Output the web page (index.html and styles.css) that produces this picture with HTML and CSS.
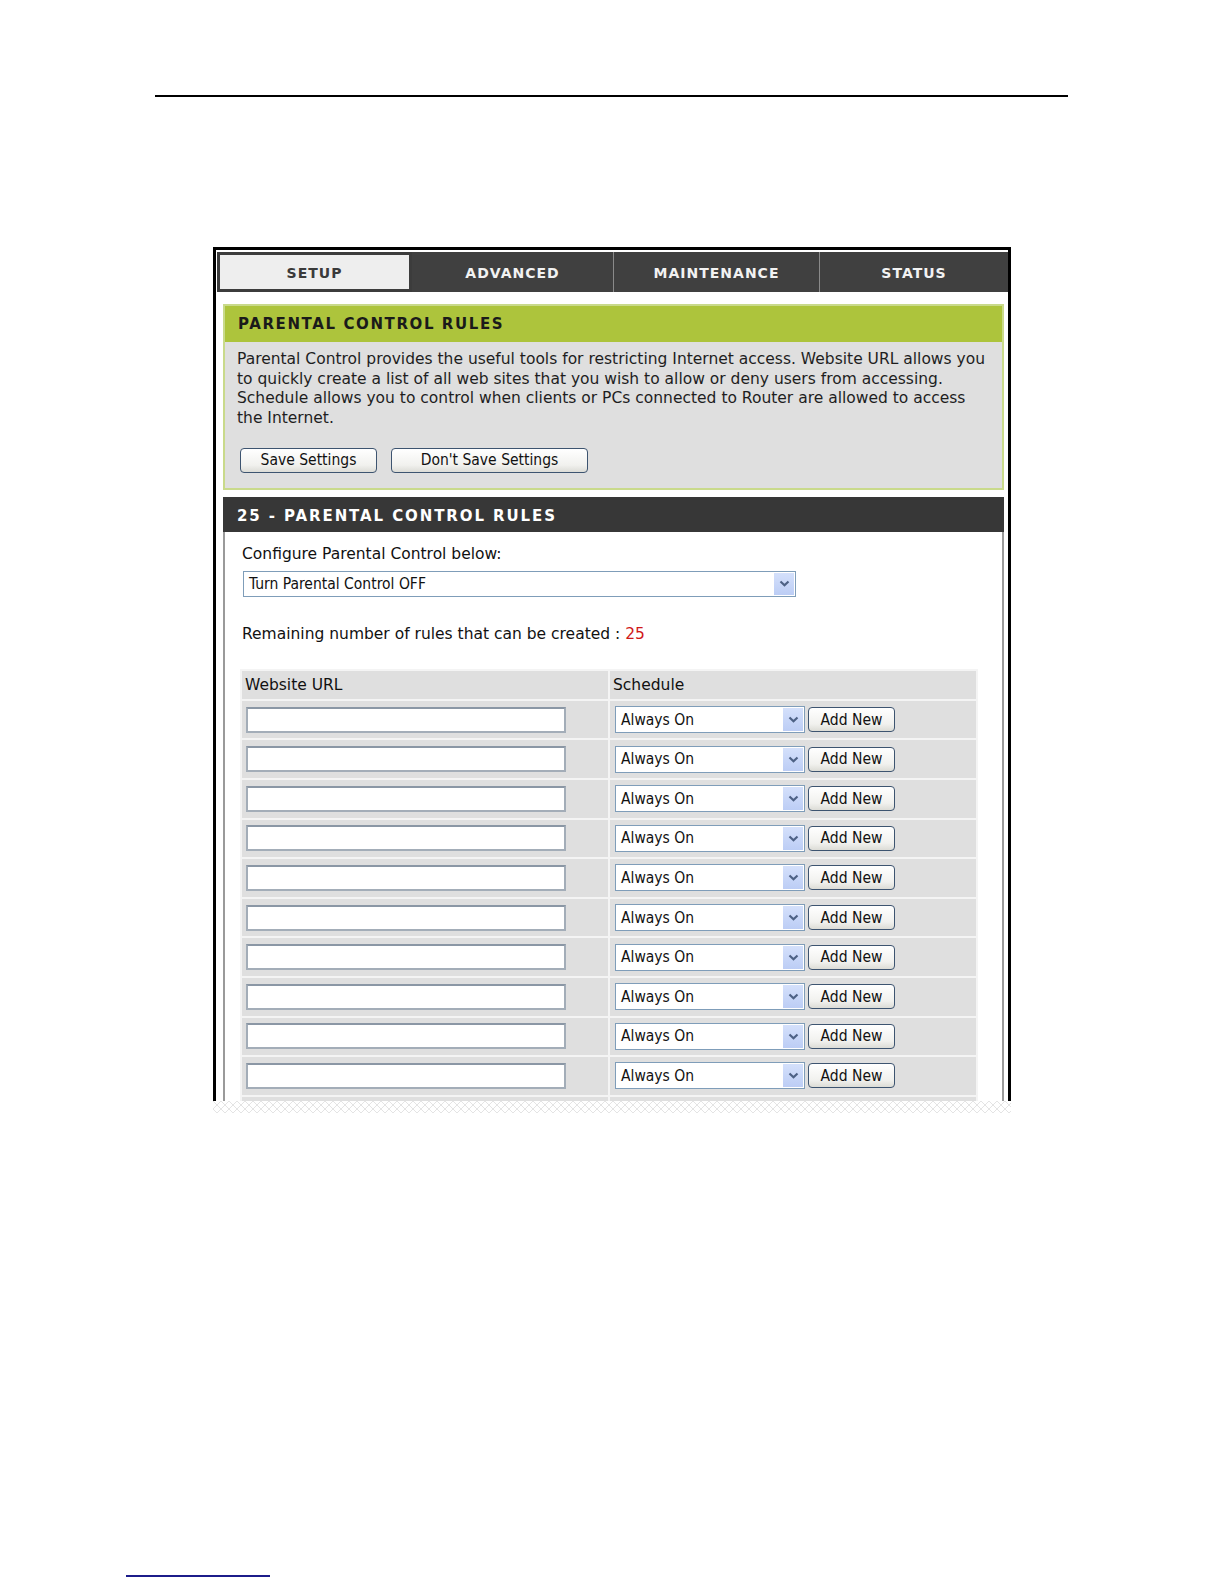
FILE: index.html
```html
<!DOCTYPE html>
<html lang="en">
<head>
    <meta charset="UTF-8">
    <title>Parental Control Rules</title>
    <link rel="stylesheet" href="styles.css">
</head>
<body>

    <hr class="page-rule">

    <!-- Router screenshot -->
    <div class="shot">
        <div class="tabs">
            <div class="tab tab-active">SETUP</div>
            <div class="tab tab-advanced">ADVANCED</div>
            <div class="tab tab-maint">MAINTENANCE</div>
            <div class="tab tab-status">STATUS</div>
        </div>

        <div class="content">
            <!-- Intro box -->
            <div class="intro-box">
                <div class="intro-title">PARENTAL CONTROL RULES</div>
                <div class="intro-body">
                    <p class="intro-text">Parental Control provides the useful tools for restricting Internet access. Website URL allows you<br>to quickly create a list of all web sites that you wish to allow or deny users from accessing.<br>Schedule allows you to control when clients or PCs connected to Router are allowed to access<br>the Internet.</p>
                    <div class="intro-buttons">
                        <button class="btn btn-save">Save Settings</button>
                        <button class="btn btn-nosave">Don't Save Settings</button>
                    </div>
                </div>
            </div>

            <!-- Rules box -->
            <div class="rules-box">
                <div class="rules-title">25 - PARENTAL CONTROL RULES</div>
                <div class="rules-body">
                    <div class="label">Configure Parental Control below:</div>
                    <div class="combo combo-wide">
                        <span class="combo-text">Turn Parental Control OFF</span>
                        <span class="combo-drop"><svg width="11" height="7" viewBox="0 0 11 7"><path d="M1.5 1.5 L5.5 5.2 L9.5 1.5" fill="none" stroke="#4d6185" stroke-width="2.2"/></svg></span>
                    </div>

                    <div class="remaining">Remaining number of rules that can be created : <span class="count">25</span></div>

                    <table class="rules-table" id="rules">
                        <tr class="head">
                            <th class="col-url">Website URL</th>
                            <th class="col-sched">Schedule</th>
                        </tr>
                    </table>
                </div>
            </div>
        </div>
    </div>
    <div class="tear"></div>

    <div class="footnote-rule"></div>

    <script>
        // build the rule rows; one more empty row peeks out under the cut edge
        const table = document.getElementById('rules');
        for (let i = 0; i < 10; i++) {
            const row = document.createElement('tr');
            row.innerHTML =
                '<td><input type="text" class="url-input"></td>' +
                '<td><div class="sched">' +
                    '<div class="combo combo-small"><span class="combo-text">Always On</span>' +
                    '<span class="combo-drop"><svg width="11" height="7" viewBox="0 0 11 7"><path d="M1.5 1.5 L5.5 5.2 L9.5 1.5" fill="none" stroke="#4d6185" stroke-width="2.2"/></svg></span></div>' +
                    '<button class="btn btn-add">Add New</button>' +
                '</div></td>';
            table.appendChild(row);
        }
        const tail = document.createElement('tr');
        tail.innerHTML = '<td></td><td></td>';
        table.appendChild(tail);
    </script>

</body>
</html>
```

FILE: styles.css
```css
body {
    margin: 0;
    background: #ffffff;
    font-family: "DejaVu Sans", sans-serif;
    color: #111111;
}

.page-rule {
    margin: 95px 156px 0 155px;
    border: none;
    border-top: 2px solid #000000;
    height: 0;
}

/* screenshot frame */
.shot {
    margin: 150px 0 0 213px;
    width: 792px;
    height: 849px;
    border: 3px solid #000000;
    border-bottom: none;
    overflow: hidden;
    padding-top: 2px;
}

.tabs {
    display: flex;
    margin-left: 1px;
    height: 40px;
}

.tab {
    font-weight: bold;
    font-size: 14px;
    letter-spacing: 1px;
    color: #f2f2f2;
    background: #404040;
    display: flex;
    align-items: center;
    justify-content: center;
    box-sizing: border-box;
    border-left: 1px solid #8a8a8a;
    padding-top: 2px;
}

.tab-active {
    width: 195px;
    background: #eeeeee;
    color: #3a3a3a;
    border: 3px solid #3c3c3c;
}

.tab-advanced { width: 201px; border-left: none; }
.tab-maint { width: 206px; }
.tab-status { flex: 1; }

.content {
    padding: 12px 4px 0 7px;
}

/* green intro box */
.intro-box {
    border: 2px solid #c9da8b;
    background: #dfdfdf;
}

.intro-title {
    background: #adc43c;
    height: 36px;
    line-height: 37px;
    padding-left: 13px;
    font-weight: bold;
    font-size: 15px;
    letter-spacing: 1.6px;
    color: #1a1a1a;
}

.intro-body {
    padding: 8px 10px 15px 12px;
}

.intro-text {
    margin: 0;
    font-size: 15.5px;
    line-height: 19.7px;
    color: #1e1e1e;
    white-space: nowrap;
}

.intro-buttons {
    margin-top: 19px;
    display: flex;
    gap: 14px;
    padding-left: 3px;
}

.btn {
    font-family: "DejaVu Sans Condensed", "DejaVu Sans", sans-serif;
    font-size: 15.5px;
    color: #111111;
    height: 25px;
    padding: 0;
    border: 1px solid #3d5470;
    border-radius: 4px;
    background: linear-gradient(#ffffff, #f1f1ee 70%, #dcdcd6);
}

.btn-save { width: 137px; }
.btn-nosave { width: 197px; }

/* dark rules box */
.rules-box {
    margin-top: 7px;
}

.rules-title {
    background: #373737;
    height: 32px;
    line-height: 32px;
    padding: 3px 0 0 14px;
    font-weight: bold;
    font-size: 15px;
    letter-spacing: 1.9px;
    color: #ffffff;
}

.rules-body {
    border-left: 2px solid #9a9a9a;
    border-right: 2px solid #9a9a9a;
    padding: 12px 0 40px 17px;
    background: #ffffff;
}

.label {
    font-size: 15.5px;
    line-height: 20px;
}

.combo {
    display: flex;
    align-items: stretch;
    box-sizing: border-box;
    border: 1px solid #7f9db9;
    background: #ffffff;
    font-family: "DejaVu Sans Condensed", "DejaVu Sans", sans-serif;
    font-size: 15.5px;
}

.combo-wide {
    margin: 7px 0 0 1px;
    width: 553px;
    height: 26px;
}

.combo-small {
    width: 190px;
    height: 27px;
}

.combo-text {
    flex: 1;
    display: flex;
    align-items: center;
    padding-left: 5px;
}

.combo-drop {
    width: 20px;
    margin: 1px;
    display: flex;
    align-items: center;
    justify-content: center;
    background: linear-gradient(#d4e0fb, #bccdf5);
}

.remaining {
    margin-top: 27px;
    font-size: 15.5px;
    line-height: 20px;
}

.count {
    color: #d01818;
}

/* rules table */
.rules-table {
    margin: 25px 0 0 -2px;
    width: 738px;
    border-spacing: 2px;
    border-collapse: separate;
    background: #f4f4f4;
}

.rules-table th,
.rules-table td {
    background: #dfdfdf;
    text-align: left;
    padding: 0;
}

.rules-table th {
    height: 28px;
    font-weight: normal;
    font-size: 15.5px;
    padding-left: 3px;
}

.col-url { width: 363px; }

.rules-table td {
    height: 37.6px;
}

.url-input {
    display: block;
    margin-left: 4px;
    width: 320px;
    height: 26px;
    box-sizing: border-box;
    border: 2px solid #a3adb8;
    border-top-color: #8b97a5;
    background: #ffffff;
}

.sched {
    display: flex;
    align-items: center;
    gap: 3px;
    margin-left: 5px;
}

.btn-add {
    width: 87px;
}

.tear {
    margin-left: 213px;
    width: 798px;
    height: 12px;
    background-image:
        linear-gradient(45deg, transparent 44%, #e4e4e4 44%, #e4e4e4 56%, transparent 56%),
        linear-gradient(-45deg, transparent 44%, #e4e4e4 44%, #e4e4e4 56%, transparent 56%);
    background-size: 8px 8px;
}

.footnote-rule {
    margin: 462px 0 0 126px;
    width: 144px;
    height: 2px;
    background: #1c1c8a;
}
```
